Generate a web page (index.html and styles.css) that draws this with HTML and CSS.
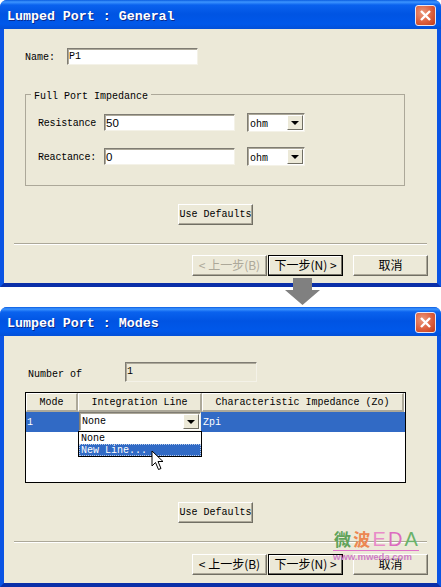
FILE: index.html
```html
<!DOCTYPE html>
<html lang="en">
<head>
  <meta charset="UTF-8">
  <title>Lumped Port</title>
  <link rel="stylesheet" href="styles.css">
</head>
<body>
  <div class="window window-general">
    <div class="titlebar">
      <span class="title">Lumped Port : General</span>
      <span class="close">
        <svg width="21" height="21" viewBox="0 0 21 21"><path d="M6 6L15 15M15 6L6 15" stroke="#fff" stroke-width="2.4" fill="none"/></svg>
      </span>
    </div>
    <div class="client">
      <div class="name-row">
        <span class="name-label">Name:</span>
        <span class="field name-field">P1</span>
      </div>
      <fieldset class="group">
        <legend>Full Port Impedance</legend>
        <div class="group-row">
          <span class="group-label">Resistance</span>
          <span class="field group-field sans">50</span>
          <span class="combo unit"><span class="combo-text">ohm</span><span class="combo-btn"></span></span>
        </div>
        <div class="group-row">
          <span class="group-label">Reactance:</span>
          <span class="field group-field sans">0</span>
          <span class="combo unit"><span class="combo-text">ohm</span><span class="combo-btn"></span></span>
        </div>
      </fieldset>
      <button class="btn defaults">Use Defaults</button>
      <div class="divider"></div>
      <div class="wizard-btns">
        <button class="btn wiz" disabled>&lt; 上一步(B)</button>
        <button class="btn wiz next">下一步(N) &gt;</button>
        <button class="btn wiz cancel">取消</button>
      </div>
    </div>
  </div>

  <!-- arrow between the two dialogs -->
  <svg class="down-arrow" width="35" height="27" viewBox="0 0 35 27"><path d="M8 0H27V12H35L17.5 27L0 12H8Z" fill="#808080"/></svg>

  <div class="window window-modes">
    <div class="titlebar">
      <span class="title">Lumped Port : Modes</span>
      <span class="close">
        <svg width="21" height="21" viewBox="0 0 21 21"><path d="M6 6L15 15M15 6L6 15" stroke="#fff" stroke-width="2.4" fill="none"/></svg>
      </span>
    </div>
    <div class="client">
      <div class="number-row">
        <span class="number-label">Number of</span>
        <span class="field number-field">1</span>
      </div>
      <div class="grid-box">
        <div class="grid-head">
          <span class="head-cell">Mode</span>
          <span class="head-cell">Integration Line</span>
          <span class="head-cell">Characteristic Impedance (Zo)</span>
        </div>
        <div class="grid-row">
          <span class="row-cell">1</span>
          <span class="combo row-combo"><span class="combo-text">None</span><span class="combo-btn"></span></span>
          <span class="row-cell">Zpi</span>
        </div>
        <ul class="drop-list">
          <li>None</li>
          <li class="picked">New Line...</li>
        </ul>
      </div>
      <button class="btn defaults defaults-modes">Use Defaults</button>
      <div class="divider"></div>
      <div class="wizard-btns wizard-btns-modes">
        <button class="btn wiz">&lt; 上一步(B)</button>
        <button class="btn wiz next">下一步(N) &gt;</button>
        <button class="btn wiz cancel">取消</button>
      </div>
    </div>
    <svg class="cursor" width="14" height="21" viewBox="0 0 14 21"><path d="M1 1V16L4.500 12.500L7.500 19.500L10 18.500L7 11.500H12Z" fill="#fff" stroke="#000"/></svg>
    <div class="watermark">
      <div class="mark-logo"><span class="c-green">微</span><span class="c-orange">波</span><span class="c-pink">E</span><span class="c-magenta">D</span><span class="c-green2">A</span></div>
      <div class="mark-url">www.mweda.com</div>
    </div>
  </div>
</body>
</html>
```

FILE: styles.css
```css
body {
  margin: 0;
  background-color: #fff;
  width: 441px;
  height: 587px;
  position: relative;
  overflow: hidden;
  font-family: "Liberation Mono", "Noto Sans CJK SC", monospace;
  font-size: 10px;
  color: #000;
}

.window {
  display: flex;
  flex-direction: column;
  position: relative;
  box-sizing: border-box;
  background-color: #0a54e4;
  border-radius: 7px 7px 0 0;
}

.window-general {
  height: 287px;
}

.window-modes {
  height: 280px;
  margin-top: 20px;
}

.titlebar {
  height: 29px;
  box-sizing: border-box;
  flex: none;
  display: flex;
  align-items: center;
  justify-content: space-between;
  padding: 1px 5px 0 7px;
  border-radius: 7px 7px 0 0;
  background: linear-gradient(to bottom, #0a5ce0 0, #3d95ff 2px, #0a62ee 5px, #0054e3 14px, #0058ea 24px, #0350d8 29px);
}

.title {
  padding-top: 2px;
  font-size: 13.3px;
  font-weight: bold;
  color: #fff;
  text-shadow: 1px 1px 0 #0a2a8c;
}

.close {
  width: 21px;
  height: 21px;
  box-sizing: border-box;
  border: 1px solid #e9e6f2;
  border-radius: 3px;
  background: radial-gradient(circle at 35% 35%, #ea9a7e 0, #dd5f3d 55%, #bf3a17 100%);
  display: flex;
  align-items: center;
  justify-content: center;
}

.close svg {
  flex: none;
}

.client {
  flex: 1;
  background-color: #ece9d8;
  border-style: solid;
  border-color: #0a54e4;
  border-width: 0 4px 4px;
  border-bottom-color: #0a2fa8;
}

.field {
  display: block;
  box-sizing: border-box;
  background-color: #fff;
  border: 1px solid;
  border-color: #7f7c73 #f4f2e8 #f4f2e8 #7f7c73;
  box-shadow: inset 1px 1px 0 #aca899;
  padding: 2px 0 0 1px;
  line-height: 12px;
}

.sans {
  font-family: "Liberation Sans", sans-serif;
  font-size: 11.5px;
}

.name-row {
  display: flex;
  align-items: center;
  margin: 19px 0 0 21px;
}

.name-label {
  width: 42px;
  padding-top: 2px;
}

.name-field {
  width: 131px;
  height: 17px;
}

.group {
  box-sizing: border-box;
  height: 101px;
  margin: 20px 32px 0 21px;
  padding: 10px 0 0 12px;
  border: 1px solid #aca899;
}

.group legend {
  margin-left: -7px;
  padding: 6px 3px 0;
  line-height: 12px;
}

.group-row {
  display: flex;
  align-items: center;
  height: 19px;
  margin-bottom: 15px;
}

.group-label {
  width: 58px;
  margin-right: 8px;
  padding-top: 2px;
  letter-spacing: -0.2px;
  white-space: nowrap;
}

.group-field {
  width: 131px;
  height: 17px;
  margin-right: 12px;
}

.combo {
  display: flex;
  align-items: center;
  justify-content: space-between;
  box-sizing: border-box;
  background-color: #fff;
  border: 1px solid;
  border-color: #7f7c73 #f4f2e8 #f4f2e8 #7f7c73;
  box-shadow: inset 1px 1px 0 #aca899;
  padding: 1px;
}

.unit {
  width: 58px;
  height: 19px;
}

.unit .combo-text {
  padding-top: 3px;
}

.combo-text {
  padding-left: 1px;
}

.combo-btn {
  width: 16px;
  height: 15px;
  box-sizing: border-box;
  background-color: #ece9d8;
  border: 1px solid;
  border-color: #fff #716f64 #716f64 #fff;
  display: flex;
  align-items: center;
  justify-content: center;
}

.combo-btn::after {
  content: "";
  border-style: solid;
  border-width: 4px 4px 0;
  border-color: #000 transparent transparent;
}

.btn {
  display: block;
  box-sizing: border-box;
  height: 21px;
  padding: 0;
  background-color: #ece9d8;
  border: 1px solid;
  border-color: #fff #716f64 #716f64 #fff;
  box-shadow: inset -1px -1px 0 #aca899;
  font-family: "Liberation Mono", "Noto Sans CJK SC", monospace;
  font-size: 10px;
  color: #000;
}

.defaults {
  width: 75px;
  margin: 18px 0 0 174px;
}

.defaults-modes {
  margin-top: 19px;
}

.divider {
  height: 1px;
  margin: 18px 10px 0;
  background-color: #aca899;
  border-bottom: 1px solid #fff;
}

.wizard-btns {
  display: flex;
  justify-content: flex-end;
  gap: 1px;
  margin-top: 10px;
  padding-right: 9px;
}

.wizard-btns-modes {
  margin-top: 11px;
}

.wiz {
  width: 75px;
  padding-bottom: 2px;
  font-family: "Noto Sans CJK SC", sans-serif;
  font-size: 12px;
}

.wiz:disabled {
  color: #aca899;
}

.next {
  border: 1px solid #000;
  box-shadow: inset -1px -1px 0 #716f64, inset 1px 1px 0 #fff;
}

.cancel {
  margin-left: 9px;
}

.number-row {
  display: flex;
  align-items: center;
  margin: 26px 0 0 24px;
}

.number-label {
  width: 97px;
  padding-top: 4px;
}

.number-field {
  width: 132px;
  height: 20px;
  padding-top: 3px;
  background-color: #ece9d8;
}

.grid-box {
  position: relative;
  box-sizing: border-box;
  width: 381px;
  height: 91px;
  margin: 10px 0 0 21px;
  background-color: #fff;
  border: 1px solid #000;
}

.grid-head,
.grid-row {
  display: grid;
  grid-template-columns: 52px 124px 202px;
}

.head-cell {
  height: 19px;
  box-sizing: border-box;
  background-color: #ece9d8;
  border: 1px solid;
  border-color: #fff #aca899 #aca899 #fff;
  border-right-width: 2px;
  border-bottom-width: 2px;
  text-align: center;
  line-height: 18px;
}

.grid-row {
  height: 20px;
  background-color: #316ac5;
}

.row-cell {
  color: #fff;
  padding: 3px 0 0 1px;
  line-height: 16px;
}

.row-combo {
  width: 122px;
  height: 19px;
  margin-left: 1px;
}

.drop-list {
  position: absolute;
  left: 52px;
  top: 38px;
  box-sizing: border-box;
  width: 124px;
  height: 26px;
  margin: 0;
  padding: 0;
  list-style: none;
  background-color: #fff;
  border: 1px solid #000;
}

.drop-list li {
  height: 12px;
  line-height: 14px;
  padding-left: 2px;
}

.drop-list .picked {
  background-color: #316ac5;
  color: #fff;
  outline: 1px dotted #b9cbe8;
  outline-offset: -1px;
}

.down-arrow {
  position: absolute;
  left: 285px;
  top: 278px;
  z-index: 2;
}

.cursor {
  position: absolute;
  left: 151px;
  top: 143px;
}

.watermark {
  position: absolute;
  left: 333px;
  top: 221px;
  width: 86px;
}

.mark-logo {
  display: flex;
  justify-content: space-between;
  align-items: center;
  height: 22px;
  padding: 0 1px;
  border-bottom: 1px solid #e070c8;
  font-family: "Noto Sans CJK SC", sans-serif;
  font-size: 17px;
  font-weight: bold;
  line-height: 20px;
}

.c-green {
  color: #5fa35a;
}

.c-orange {
  color: #ec8752;
}

.c-pink,
.c-magenta,
.c-green2 {
  font-family: "Liberation Sans", sans-serif;
  font-size: 20px;
  font-weight: normal;
}

.c-pink {
  color: #e88cc8;
}

.c-magenta {
  color: #dc6cc0;
}

.c-green2 {
  color: #6ab26a;
}

.mark-url {
  font-family: "Liberation Sans", sans-serif;
  font-size: 9.5px;
  font-weight: bold;
  line-height: 11px;
  white-space: nowrap;
  color: #cf7fc7;
}
```
